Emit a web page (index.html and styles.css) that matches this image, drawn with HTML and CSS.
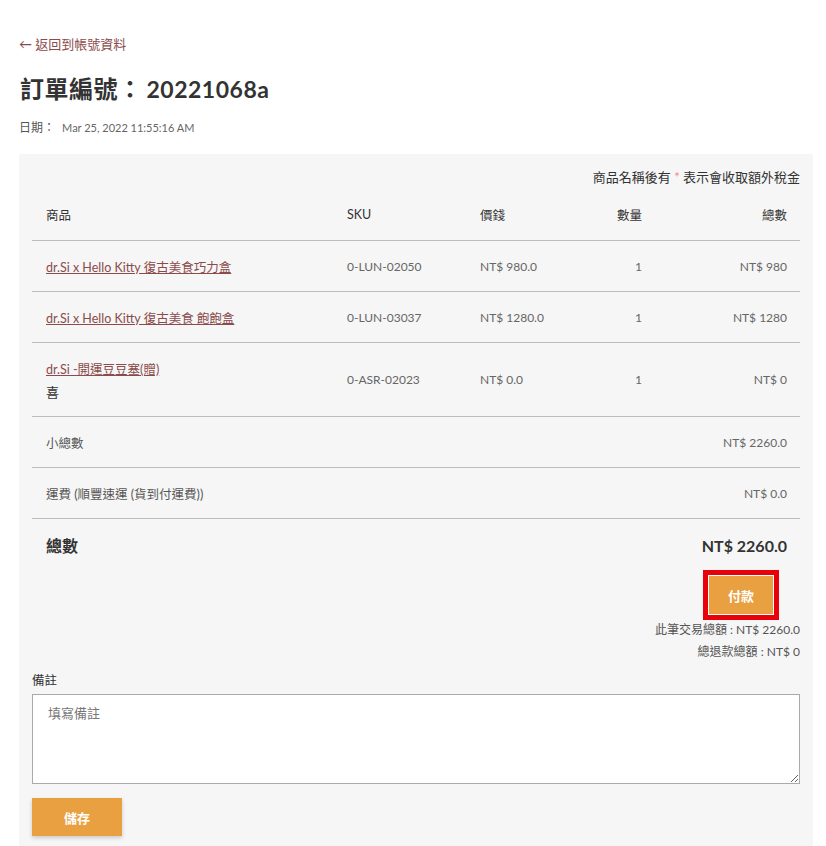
FILE: index.html
```
<!DOCTYPE html>
<html lang="zh-Hant">
<head>
<meta charset="utf-8">
<title>訂單編號：20221068a</title>
<link rel="stylesheet" href="styles.css">
</head>
<body>
<div class="page">
  <a class="back" href="#">&larr; 返回到帳號資料</a>
  <h1 class="title">訂單編號：<span class="num">20221068a</span></h1>
  <div class="date">日期： <span class="date-val">Mar 25, 2022 11:55:16 AM</span></div>

  <div class="panel">
    <div class="tax-note">商品名稱後有 <span class="star">*</span> 表示會收取額外稅金</div>
    <table class="order">
      <colgroup>
        <col class="c1"><col class="c2"><col class="c3"><col class="c4"><col class="c5">
      </colgroup>
      <thead>
        <tr>
          <th>商品</th><th>SKU</th><th>價錢</th><th class="r">數量</th><th class="r">總數</th>
        </tr>
      </thead>
      <tbody>
        <tr>
          <td><a class="plink" href="#">dr.Si x Hello Kitty 復古美食巧力盒</a></td>
          <td>0-LUN-02050</td><td>NT$ 980.0</td><td class="r">1</td><td class="r">NT$ 980</td>
        </tr>
        <tr>
          <td><a class="plink" href="#">dr.Si x Hello Kitty 復古美食 飽飽盒</a></td>
          <td>0-LUN-03037</td><td>NT$ 1280.0</td><td class="r">1</td><td class="r">NT$ 1280</td>
        </tr>
        <tr class="tall">
          <td><a class="plink" href="#">dr.Si -開運豆豆塞(贈)</a><div class="extra">喜</div></td>
          <td>0-ASR-02023</td><td>NT$ 0.0</td><td class="r">1</td><td class="r">NT$ 0</td>
        </tr>
        <tr class="sum">
          <td colspan="4">小總數</td><td class="r">NT$ 2260.0</td>
        </tr>
        <tr class="sum">
          <td colspan="4">運費 (順豐速運 (貨到付運費))</td><td class="r">NT$ 0.0</td>
        </tr>
        <tr class="grand">
          <td colspan="4">總數</td><td class="r">NT$ 2260.0</td>
        </tr>
      </tbody>
    </table>

    <div class="pay-row">
      <button class="btn pay" type="button">付款</button>
    </div>
    <div class="totals">
      <div>此筆交易總額 : NT$ 2260.0</div>
      <div>總退款總額 : NT$ 0</div>
    </div>

    <label class="note-label" for="note">備註</label>
    <textarea id="note" class="note" placeholder="填寫備註"></textarea>
    <button class="btn save" type="button">儲存</button>
  </div>
</div>
</body>
</html>
```
FILE: styles.css
```
html, body {
  margin: 0;
  padding: 0;
  background: #fff;
}
body {
  font-family: Lato, "Noto Sans CJK TC", sans-serif;
  color: #333;
  font-size: 13px;
}
.page {
  padding: 34px 13px 0 19px;
}
.back {
  display: block;
  color: #8b4b4b;
  text-decoration: none;
  font-size: 13px;
  line-height: 20px;
}
.title {
  margin: 19px 0 0 1px;
  font-size: 24px;
  line-height: 32px;
  font-weight: 700;
  color: #333;
  letter-spacing: 0.5px;
}
.title .num {
  margin-left: 4px;
  font-size: 23px;
}
.date {
  margin-top: 15px;
  font-size: 12px;
  line-height: 16px;
  color: #555;
}
.date-val {
  margin-left: 4px;
  font-size: 11px;
  color: #666;
}
.panel {
  margin-top: 18px;
  background: #f6f6f6;
  padding: 12px 13px 10px 13px;
  width: 768px;
}
.tax-note {
  text-align: right;
  font-size: 13px;
  line-height: 22px;
  color: #333;
}
.star {
  color: #e88;
}
.order {
  width: 768px;
  border-collapse: collapse;
  table-layout: fixed;
}
.c1 { width: 301px; }
.c2 { width: 133px; }
.c3 { width: 94px; }
.c4 { width: 95px; }
.c5 { width: 145px; }
.order th {
  text-align: left;
  font-weight: 400;
  font-size: 12.5px;
  color: #333;
  height: 52px;
  padding: 0 13px 0 14px;
}
.order td {
  border-top: 1px solid #bdbdbd;
  height: 50px;
  padding: 0 13px 0 14px;
  font-size: 12px;
  color: #666;
  vertical-align: middle;
}
.order .r {
  text-align: right;
}
.order tr.tall td {
  height: 73px;
}
.plink {
  color: #8b4b4b;
  text-decoration: underline;
  font-size: 12.5px;
}
.extra {
  margin-top: 4px;
  color: #333;
  font-size: 13px;
}
.order tr.sum td {
  color: #666;
}
.order tr.sum td:first-child {
  color: #555;
  font-size: 12.5px;
}
.order tr.grand td {
  height: 52px;
  color: #333;
  font-weight: 700;
  font-size: 16px;
}
.pay-row {
  display: flex;
  justify-content: flex-end;
  padding-right: 27px;
  margin-top: 5px;
}
.btn {
  border: none;
  background: #e9a041;
  color: #fff;
  font-family: "Noto Sans CJK TC", sans-serif;
  font-weight: 700;
  font-size: 13px;
  cursor: pointer;
}
.pay {
  width: 64px;
  height: 38px;
  outline: 5px solid #e8000a;
  outline-offset: 1px;
  box-shadow: 0 0 0 1px #fff;
}
.totals {
  margin-top: 5px;
  text-align: right;
  font-size: 12px;
  line-height: 22px;
  color: #555;
}
.note-label {
  display: block;
  margin-top: 9px;
  font-size: 12.5px;
  line-height: 18px;
  color: #333;
}
.note {
  display: block;
  box-sizing: border-box;
  width: 768px;
  height: 90px;
  margin-top: 4px;
  border: 1px solid #aaa;
  background: #fff;
  padding: 8px 15px;
  font-family: "Noto Sans CJK TC", sans-serif;
  font-size: 13px;
  resize: vertical;
}
.note::placeholder {
  color: #777;
}
.save {
  margin-top: 14px;
  width: 90px;
  height: 38px;
  box-shadow: 0 2px 4px rgba(0,0,0,0.18);
}
```
